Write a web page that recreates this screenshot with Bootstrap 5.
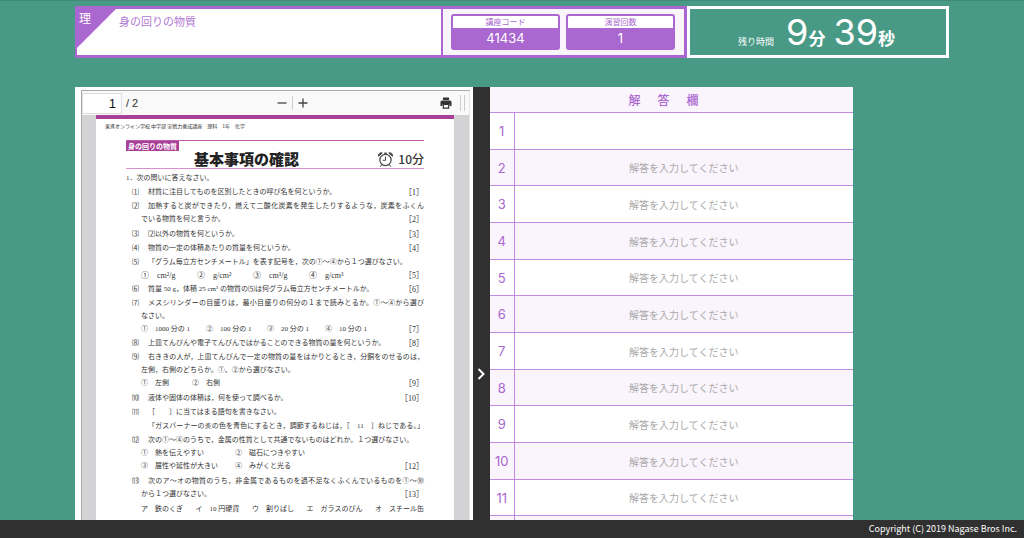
<!DOCTYPE html>
<html lang="ja">
<head>
<meta charset="utf-8">
<meta name="viewport" content="width=device-width, initial-scale=1">
<title>身の回りの物質</title>
<link href="https://cdn.jsdelivr.net/npm/bootstrap@5.3.0/dist/css/bootstrap.min.css" rel="stylesheet">
<style>
  :root { --teal: #489a86; --violet: #aa67cf; --tint: #faf4fc; --ink: #303030; --magenta: #a94097; }
  body { font-family: "Noto Sans CJK JP", sans-serif; background: var(--teal); box-shadow: inset 0 1px 0 #42897a; color: var(--ink); }
  .shell { padding: 6px 75px 0; }

  .top-bar { display: grid; grid-template-columns: 366fr 246fr 262fr; grid-template-rows: 100%; height: 52px; margin-bottom: 29px; }
  .lesson { border: solid var(--violet); border-width: 3px 0 3px 2px; background: linear-gradient(135deg, var(--violet) 27px, #fff 28px); color: var(--violet); font-size: 11px; line-height: 16px; }
  .subject { width: 42px; padding: 1px 0 0 2px; color: #fff; font-size: 12px; }
  .lesson-name { padding-top: 4px; font-size: 11px; color: #b279d3; }
  .stats { border: 3px solid var(--violet); border-width: 3px 3px 3px 2px; background: var(--tint); padding: 5px 9px 5px 8px; gap: 6px; }
  .stat { border: 2px solid var(--violet); border-radius: 3px; background: var(--violet); text-align: center; overflow: hidden; }
  .stat dt { background: #fff; color: var(--violet); font-weight: 400; font-size: 8px; line-height: 12px; }
  .stat dd { color: #fff; font: 13px/21px Inter, sans-serif; margin: 0; }
  .timer { border: 3px solid #fff; color: #fff; line-height: 40px; padding: 3px 3px 0 0; }
  .timer-label { font-size: 9px; margin-right: 12px; }
  .timer-digits { font-family: Inter, sans-serif; font-weight: 400; font-size: 36px; }
  .timer-unit { font-size: 17px; font-weight: 700; }

  .work { display: grid; grid-template-columns: 398fr 17px 363fr; grid-template-rows: 100%; margin-right: 96px; }
  .doc-pane { padding: 3px 3px 0 6px; }
  .viewer { border: 1px solid #aaa; border-right-color: #e4e4e4; border-bottom: 0; background: #d3d3d5; }
  .tools { flex: 0 0 24px; background: #f9f9f9; font: 11px "Liberation Sans", sans-serif; }
  .tools-end { width: 160px; }
  .page-no { width: 40px; height: 21px; border: 1px solid #ddd; text-align: right; padding: 0 5px 0 0; font: 13px "Liberation Sans", sans-serif; color: #111; }
  .tool-btn { border: 0; background: none; padding: 0; line-height: 0; }
  .rule { width: 1px; height: 14px; background: #ccc; }
  .grip { width: 5px; height: 16px; border: solid #ccc; border-width: 0 1px; }

  .sheet { margin: 0 15px 0 14px; padding: 0 30px; background: #fff; border-top: 4px solid var(--magenta); font: 7px/13px "Liberation Serif", "Noto Sans CJK JP", serif; color: #333; }
  .source { font: 5px/14px "Noto Sans CJK JP", sans-serif; margin: 0 0 7px -21px; }
  .sheet-head { border-top: 1px solid #c05cb0; border-bottom: 1px solid #d98fce; height: 29px; margin-bottom: 3px; }
  .topic { background: var(--magenta); color: #fff; font: 700 7px/10px "Noto Sans CJK JP", sans-serif; padding: 0 2px; }
  .sheet-title { font: 900 15px/18px "Noto Sans CJK JP", sans-serif; margin: 0 0 0 15px; color: #222; }
  .limit { font: 500 12px/16px "Noto Sans CJK JP", sans-serif; }
  .qs { padding-top: 1px; }
  .qs > li { padding: 0 0 1px 16px; margin-left: 6px; }
  .qs > li.loose { padding-bottom: 2px; }
  .num { width: 16px; margin-left: -16px; flex: none; }
  .blank { margin-left: auto; font-size: 8px; }
  .cont { margin-left: -7px; }
  .full { text-align-last: justify; flex: 1; white-space: nowrap; }
  .opts { display: grid; justify-content: start; white-space: nowrap; }
  .o5 { grid-template-columns: repeat(4, 56px); font-size: 8px; }
  .o7 { grid-template-columns: 65px 61px 58px 56px; }
  .o9 { grid-template-columns: 51px 51px; }
  .o12 { grid-template-columns: 94px 94px; }

  .divider { background: var(--ink); border: 0; padding: 0; color: #fff; }
  .answers-title { height: 25px; background: var(--tint); color: var(--violet); font-size: 12px; line-height: 26px; gap: 17px; padding-right: 16px; margin: 0; }
  .answers { width: 100%; border-collapse: collapse; }
  .answers tr { height: 37px; border-top: 1px solid #c08be0; background: #fff; }
  .answers tr:nth-child(3n+2) { height: 36px; }
  .answers tr:nth-child(even) { background: var(--tint); }
  .answers th { width: 24px; padding: 0; border-right: 1px solid #c08be0; text-align: center; color: var(--violet); font: 13px/20px Inter, sans-serif; }
  .answers td { padding: 0; }
  .answers input { width: 100%; height: 32px; border: 0; outline: 0; background: none; text-align: center; font-size: 10px; display: block; }
  .answers input::placeholder { color: #aaa; opacity: 1; }

  .foot { background: var(--ink); color: #fff; font-size: 9px; line-height: 18px; padding-right: 7px; }
</style>
</head>
<body class="vh-100 d-flex flex-column overflow-hidden">
<div class="shell flex-grow-1 d-flex flex-column overflow-hidden">
  <header class="top-bar flex-shrink-0">
    <div class="lesson d-flex">
      <div class="subject">理</div>
      <div class="lesson-name">身の回りの物質</div>
    </div>
    <div class="stats d-flex">
      <dl class="stat flex-fill w-50 mb-0"><dt>講座コード</dt><dd>41434</dd></dl>
      <dl class="stat flex-fill w-50 mb-0"><dt>演習回数</dt><dd>1</dd></dl>
    </div>
    <div class="timer d-flex align-items-baseline justify-content-center">
      <span class="timer-label">残り時間</span>
      <span class="timer-digits">9</span><span class="timer-unit me-2">分</span>
      <span class="timer-digits">39</span><span class="timer-unit">秒</span>
    </div>
  </header>

  <main class="work flex-grow-1 overflow-hidden">
    <section class="doc-pane bg-white overflow-hidden">
      <div class="viewer h-100 d-flex flex-column overflow-hidden">
        <div class="tools d-flex align-items-center">
          <div class="d-flex align-items-center flex-grow-1">
            <input class="page-no" type="text" value="1" aria-label="ページ"><span class="ms-1">/ 2</span>
          </div>
          <div class="d-flex align-items-center gap-1">
            <button class="tool-btn" type="button" aria-label="縮小"><svg width="12" height="12" viewBox="0 0 12 12"><path d="M1.500 6h9" stroke="#444" stroke-width="1.300"/></svg></button>
            <span class="rule"></span>
            <button class="tool-btn" type="button" aria-label="拡大"><svg width="12" height="12" viewBox="0 0 12 12"><path d="M1.500 6h9M6 1.500v9" stroke="#444" stroke-width="1.300"/></svg></button>
          </div>
          <div class="tools-end d-flex align-items-center justify-content-end gap-2 pe-1">
            <button class="tool-btn" type="button" aria-label="印刷"><svg width="12" height="12" viewBox="0 0 12 12"><path d="M3 .5h6V3H3z" fill="#333"/><path d="M2 3.500h8a1.500 1.500 0 0 1 1.500 1.500v4H9.500V7h-7v2H.5V5A1.500 1.500 0 0 1 2 3.500z" fill="#333"/><path d="M3.300 7.500h5.400v3.700H3.300z" fill="#f9f9f9" stroke="#333" stroke-width="1.200"/></svg></button>
            <span class="grip me-n1"></span>
          </div>
        </div>

        <article class="sheet flex-grow-1">
          <p class="source">東進オンライン学校 中学部 実戦力養成講座　理科　1年　化学</p>
          <div class="sheet-head d-flex">
            <div class="d-flex align-items-start"><span class="topic text-nowrap">身の回りの物質</span></div>
            <h1 class="sheet-title align-self-end text-nowrap">基本事項の確認</h1>
            <div class="limit ms-auto d-flex align-self-end gap-1">
              <svg width="17" height="17" viewBox="0 0 17 17" fill="none" stroke="#444" aria-hidden="true"><circle cx="8.500" cy="9" r="5.600" stroke-width="1.200"/><path d="M8.500 5.500V9.300H5.800M4.800 13.500l-1.500 2.200M12.200 13.500l1.500 2.200"/><path d="M1.500 5.200C1 3 3 1.200 5.200 2zM15.500 5.200C16 3 14 1.200 11.800 2z" fill="#555"/><path d="M7 2.200h3" stroke-width="1.200"/></svg>
              <span>10分</span>
            </div>
          </div>
          <div>1．次の問いに答えなさい。</div>
          <ol class="qs list-unstyled m-0">
            <li><div class="d-flex"><span class="num">⑴</span>材質に注目してものを区別したときの呼び名を何というか。<span class="blank">［1］</span></div></li>
            <li class="loose"><div class="d-flex"><span class="num">⑵</span><span class="full">加熱すると炭ができたり，燃えて二酸化炭素を発生したりするような，炭素をふくん</span></div>
              <div class="cont d-flex">でいる物質を何と言うか。<span class="blank">［2］</span></div></li>
            <li><div class="d-flex"><span class="num">⑶</span>⑵以外の物質を何というか。<span class="blank">［3］</span></div></li>
            <li><div class="d-flex"><span class="num">⑷</span>物質の一定の体積あたりの質量を何というか。<span class="blank">［4］</span></div></li>
            <li><div class="d-flex"><span class="num">⑸</span>「グラム毎立方センチメートル」を表す記号を，次の①～④から１つ選びなさい。</div>
              <div class="cont d-flex"><div class="opts o5"><span>①　cm²/g</span><span>②　g/cm²</span><span>③　cm³/g</span><span>④　g/cm³</span></div><span class="blank">［5］</span></div></li>
            <li><div class="d-flex"><span class="num">⑹</span>質量 50 g，体積 25 cm³ の物質の⑸は何グラム毎立方センチメートルか。<span class="blank">［6］</span></div></li>
            <li><div class="d-flex"><span class="num">⑺</span><span class="full">メスシリンダーの目盛りは，最小目盛りの何分の１まで読みとるか。①～④から選び</span></div>
              <div class="cont">なさい。</div>
              <div class="cont d-flex"><div class="opts o7"><span>①　1000 分の 1</span><span>②　100 分の 1</span><span>③　20 分の 1</span><span>④　10 分の 1</span></div><span class="blank">［7］</span></div></li>
            <li><div class="d-flex"><span class="num">⑻</span>上皿てんびんや電子てんびんではかることのできる物質の量を何というか。<span class="blank">［8］</span></div></li>
            <li class="loose"><div class="d-flex"><span class="num">⑼</span><span class="full">右ききの人が，上皿てんびんで一定の物質の量をはかりとるとき，分銅をのせるのは，</span></div>
              <div class="cont">左側，右側のどちらか。①、②から選びなさい。</div>
              <div class="cont d-flex"><div class="opts o9"><span>①　左側</span><span>②　右側</span></div><span class="blank">［9］</span></div></li>
            <li><div class="d-flex"><span class="num">⑽</span>液体や固体の体積は，何を使って調べるか。<span class="blank">［10］</span></div></li>
            <li><div class="d-flex"><span class="num">⑾</span>［　　］に当てはまる語句を書きなさい。</div></li>
            <li><div class="full">「ガスバーナーの炎の色を青色にするとき，調節するねじは，［　11　］ねじである。」</div></li>
            <li class="loose"><div class="d-flex"><span class="num">⑿</span>次の①～④のうちで，金属の性質として共通でないものはどれか。１つ選びなさい。</div>
              <div class="cont opts o12"><span>①　熱を伝えやすい</span><span>②　磁石につきやすい</span></div>
              <div class="cont d-flex"><div class="opts o12"><span>③　展性や延性が大きい</span><span>④　みがくと光る</span></div><span class="blank">［12］</span></div></li>
            <li class="loose"><div class="d-flex"><span class="num">⒀</span><span class="full">次のア～オの物質のうち，非金属であるものを過不足なくふくんでいるものを①～⑩</span></div>
              <div class="cont d-flex">から１つ選びなさい。<span class="blank">［13］</span></div></li>
            <li><div class="cont d-flex justify-content-between text-nowrap"><span>ア　鉄のくぎ</span><span>イ　10 円硬貨</span><span>ウ　割りばし</span><span>エ　ガラスのびん</span><span>オ　スチール缶</span></div></li>
          </ol>
        </article>
      </div>
    </section>

    <button class="divider d-flex flex-column align-items-center" type="button" aria-label="解答欄を閉じる">
      <span style="flex:2"></span>
      <svg width="9" height="12" viewBox="0 0 9 12" fill="none" stroke="#fff" stroke-width="2"><path d="M1.500 1l5 5-5 5"/></svg>
      <span style="flex:1"></span>
    </button>

    <section class="bg-white overflow-hidden">
      <h2 class="answers-title d-flex justify-content-center"><span>解</span><span>答</span><span>欄</span></h2>
      <table class="answers">
        <tbody>
          <tr><th><label for="a1">1</label></th><td><input id="a1" type="text"></td></tr>
          <tr><th><label for="a2">2</label></th><td><input id="a2" type="text" placeholder="解答を入力してください"></td></tr>
          <tr><th><label for="a3">3</label></th><td><input id="a3" type="text" placeholder="解答を入力してください"></td></tr>
          <tr><th><label for="a4">4</label></th><td><input id="a4" type="text" placeholder="解答を入力してください"></td></tr>
          <tr><th><label for="a5">5</label></th><td><input id="a5" type="text" placeholder="解答を入力してください"></td></tr>
          <tr><th><label for="a6">6</label></th><td><input id="a6" type="text" placeholder="解答を入力してください"></td></tr>
          <tr><th><label for="a7">7</label></th><td><input id="a7" type="text" placeholder="解答を入力してください"></td></tr>
          <tr><th><label for="a8">8</label></th><td><input id="a8" type="text" placeholder="解答を入力してください"></td></tr>
          <tr><th><label for="a9">9</label></th><td><input id="a9" type="text" placeholder="解答を入力してください"></td></tr>
          <tr><th><label for="a10">10</label></th><td><input id="a10" type="text" placeholder="解答を入力してください"></td></tr>
          <tr><th><label for="a11">11</label></th><td><input id="a11" type="text" placeholder="解答を入力してください"></td></tr>
          <tr><th></th><td></td></tr>
        </tbody>
      </table>
    </section>
  </main>
</div>
<footer class="foot text-end">Copyright (C) 2019 Nagase Bros Inc.</footer>
<script src="https://cdn.jsdelivr.net/npm/bootstrap@5.3.0/dist/js/bootstrap.bundle.min.js"></script>
</body>
</html>
